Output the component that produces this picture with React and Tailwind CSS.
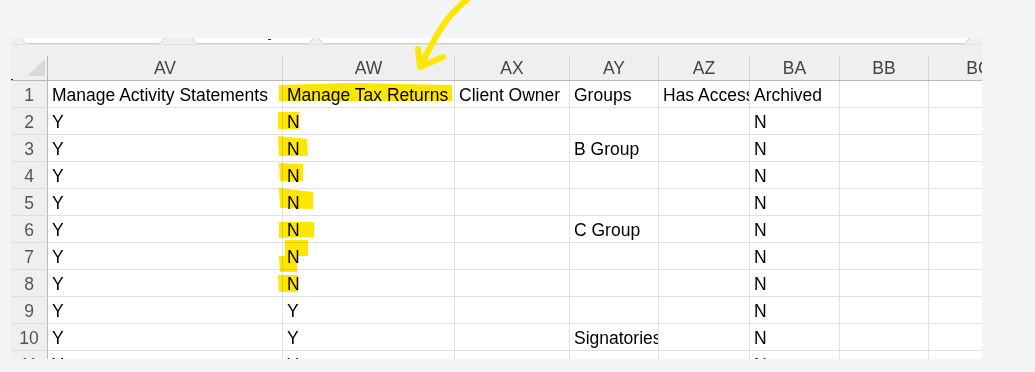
import React from "react";

const font = { fontFamily: '"Liberation Sans", Arial, sans-serif' };

const colW = ["w-[235px]", "w-[172px]", "w-[115px]", "w-[89px]", "w-[91px]", "w-[90px]", "w-[89px]", "w-[100px]"];
const letters = ["AV", "AW", "AX", "AY", "AZ", "BA", "BB", "BC"];

const rows = [
  ["Manage Activity Statements", "Manage Tax Returns", "Client Owner", "Groups", "Has Access", "Archived", "", ""],
  ["Y", "N", "", "", "", "N", "", ""],
  ["Y", "N", "", "B Group", "", "N", "", ""],
  ["Y", "N", "", "", "", "N", "", ""],
  ["Y", "N", "", "", "", "N", "", ""],
  ["Y", "N", "", "C Group", "", "N", "", ""],
  ["Y", "N", "", "", "", "N", "", ""],
  ["Y", "N", "", "", "", "N", "", ""],
  ["Y", "Y", "", "", "", "N", "", ""],
  ["Y", "Y", "", "Signatories", "", "N", "", ""],
  ["Y", "Y", "", "", "", "N", "", ""],
];

export default function App() {
  return (
    <div className="relative w-[1035px] h-[372px] bg-[#f3f4f6] overflow-hidden" style={font}>
      <div className="pt-[38px] pl-[11px]">
        <div className="w-[971px] h-[321px] bg-white overflow-hidden flex flex-col">
          {/* toolbar strip with pill bottoms */}
          <div className="h-[6px] shrink-0 bg-[#efefef] overflow-hidden flex items-end pl-[11px]">
            <div className="w-[142px] h-[20px] shrink-0 bg-white border border-[#cfcfcf] rounded-[6px]" />
            <div className="relative w-[120px] h-[20px] shrink-0 ml-[29px] bg-white border border-[#cfcfcf] rounded-[6px]">
              <div className="absolute left-[74px] bottom-[3px] w-[3px] h-[1px] bg-[#333]" />
            </div>
            <div className="w-[650px] h-[20px] shrink-0 ml-[6px] bg-white border border-[#cfcfcf] rounded-[6px]" />
          </div>
          {/* column header */}
          <div className="h-[37px] shrink-0 flex bg-[#efefef] border-t border-[#e2e2e2] border-b border-b-[#b9b9b9]">
            <div className="w-[37px] shrink-0 relative border-r border-[#b9b9b9] mt-[11px]">
              <svg className="absolute left-[16px] top-[3px]" width="18" height="17" viewBox="0 0 18 17">
                <polygon points="18,0 18,17 0,17" fill="#d9d9d9" />
              </svg>
            </div>
            {letters.map((l, i) => (
              <div key={l} className={`${colW[i]} shrink-0 mt-[11px] border-r border-[#d6d6d6] text-center text-[17.5px] leading-[24px] text-[#444]`}>
                {l}
              </div>
            ))}
          </div>
          {/* data rows */}
          {rows.map((r, ri) => (
            <div key={ri} className="h-[27px] shrink-0 flex">
              <div className="w-[37px] shrink-0 border-r border-[#b9b9b9] bg-[#efefef] text-center text-[17.5px] leading-[26px] pt-[1px] text-[#555] border-b border-b-[#dedede]">
                {ri + 1}
              </div>
              {r.map((c, ci) => (
                <div
                  key={ci}
                  className={`${colW[ci]} shrink-0 border-r border-b border-[#e1e1e1] overflow-hidden whitespace-nowrap text-[17.5px] leading-[26px] pt-[1px] pl-[4px] text-black`}
                >
                  {c}
                </div>
              ))}
            </div>
          ))}
        </div>
      </div>

      {/* highlighter marks */}
      <svg className="absolute left-0 top-0 pointer-events-none mix-blend-multiply" width="1035" height="372" viewBox="0 0 1035 372">
        <g fill="#ffe600">
          <polygon points="279,85 350,83 452,85 452,101 279,101" />
          <polygon points="278,112 299,112 299,129 278,129" />
          <polygon points="278,136 307,139 308,156 279,156" />
          <polygon points="279,163 303,164 303,181 280,181" />
          <polygon points="279,188 313,192 313,209 280,208" />
          <polygon points="279,222 314,222 314,237 279,238" />
          <polygon points="285,240 308,240 308,256 285,256" />
          <polygon points="279,256 297,255 297,272 280,272" />
          <polygon points="278,275 298,275 298,292 279,292" />
        </g>
      </svg>

      {/* arrow */}
      <svg className="absolute left-0 top-0 pointer-events-none" width="1035" height="372" viewBox="0 0 1035 372">
        <g fill="none" stroke="#ffe500" strokeWidth="6" strokeLinecap="round" strokeLinejoin="round">
          <path d="M470,-3 C456,8 444,22 437,35 L420,66" />
          <path d="M418,49 L420,67 L443,57" />
        </g>
      </svg>

      <div className="absolute left-[11px] top-[79px] w-[2px] h-[1px] bg-[#222]" />
    </div>
  );
}
